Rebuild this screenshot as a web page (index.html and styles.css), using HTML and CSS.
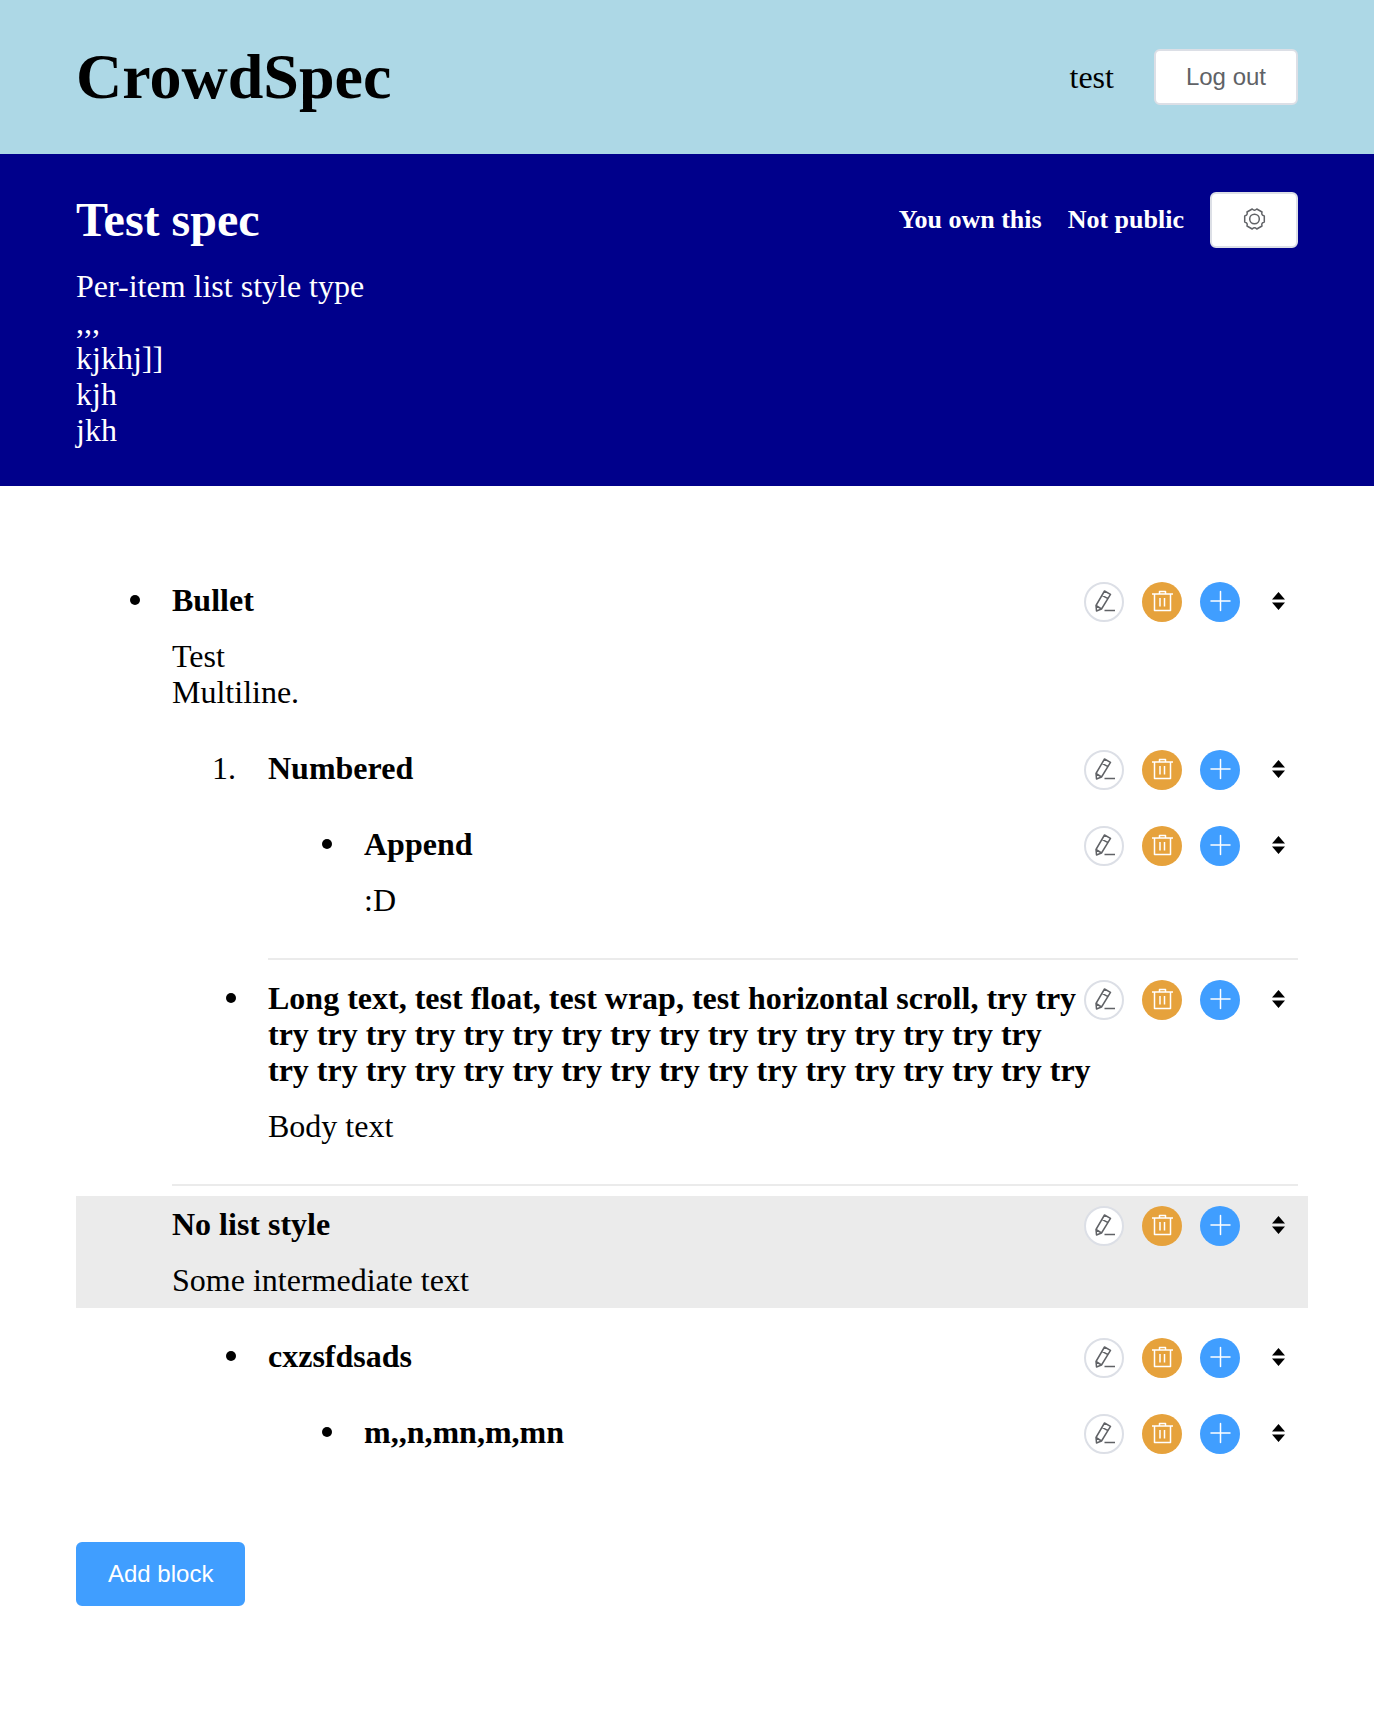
FILE: index.html
```html
<!DOCTYPE html>
<html lang="en">
<head>
<meta charset="utf-8">
<meta name="viewport" content="width=device-width, initial-scale=1">
<title>CrowdSpec</title>
<link rel="stylesheet" href="styles.css">
</head>
<body>
<svg class="sprite" aria-hidden="true">
  <symbol id="edit" viewBox="0 0 24 24"><path d="M12.500 1 18.500 4.400 9.500 19 4.500 21 4 15.500zM10 5.300l6 3.400M4 15.500l5.500 3.500M12.500 20.500H23" fill="none" stroke="currentColor" stroke-width="1.500" stroke-linejoin="round"/></symbol>
  <symbol id="trash" viewBox="0 0 24 24"><path d="M2 4h21M9.500 4V1.500h6V4M4.500 4v16.500h16V4M10 8v8.500M14.500 8v8.500" fill="none" stroke="currentColor" stroke-width="1.500" stroke-linejoin="round"/></symbol>
  <symbol id="plus" viewBox="0 0 24 24"><path d="M12.500 1.500v19M3 11h19" fill="none" stroke="currentColor" stroke-width="1.500" stroke-linecap="round"/></symbol>
  <symbol id="sort" viewBox="0 0 24 24"><path d="M12.500 2 19 9.500H6zM6 12.500h13L12.500 20z" fill="currentColor"/></symbol>
  <symbol id="gear" viewBox="0 0 24 24"><g fill="none" stroke="currentColor" stroke-width="1.500" stroke-linejoin="round"><path d="M22.300 8V14Q19 14.700 20 18L14.800 21Q12.500 18.500 10.200 21L5 18Q6 14.700 2.700 14V8Q6 7.300 5 4L10.200 1Q12.500 3.500 14.800 1L20 4Q19 7.300 22.300 8z"/><circle cx="12.500" cy="11" r="4.800"/></g></symbol>
</svg>
<header class="site-header">
  <h1 class="brand">CrowdSpec</h1>
  <div class="account">
    <span>test</span>
    <button class="button" type="button">Log out</button>
  </div>
</header>
<section class="spec">
  <div class="spec-bar">
    <h2 class="spec-title">Test spec</h2>
    <div class="spec-status">
      <span>You own this</span>
      <span>Not public</span>
      <button class="button" type="button" aria-label="Settings"><svg class="gear"><use href="#gear"/></svg></button>
    </div>
  </div>
  <p class="spec-text">Per-item list style type
,,,
kjkhj]]
kjh
jkh</p>
</section>
<main class="content">
  <ul class="blocks">
    <li>
      <div class="block">
        <span class="marker disc"></span>
        <div class="actions"><button class="round edit" type="button" aria-label="Edit"><svg><use href="#edit"/></svg></button><button class="round remove" type="button" aria-label="Delete"><svg><use href="#trash"/></svg></button><button class="round add" type="button" aria-label="Add"><svg><use href="#plus"/></svg></button><button class="round move" type="button" aria-label="Move"><svg><use href="#sort"/></svg></button></div>
        <h3 class="block-title">Bullet</h3>
        <p class="block-text">Test
Multiline.</p>
      </div>
      <ul class="blocks nested">
        <li>
          <div class="block">
            <span class="marker">1.</span>
            <div class="actions"><button class="round edit" type="button" aria-label="Edit"><svg><use href="#edit"/></svg></button><button class="round remove" type="button" aria-label="Delete"><svg><use href="#trash"/></svg></button><button class="round add" type="button" aria-label="Add"><svg><use href="#plus"/></svg></button><button class="round move" type="button" aria-label="Move"><svg><use href="#sort"/></svg></button></div>
            <h3 class="block-title">Numbered</h3>
          </div>
          <ul class="blocks nested">
            <li>
              <div class="block">
                <span class="marker disc"></span>
                <div class="actions"><button class="round edit" type="button" aria-label="Edit"><svg><use href="#edit"/></svg></button><button class="round remove" type="button" aria-label="Delete"><svg><use href="#trash"/></svg></button><button class="round add" type="button" aria-label="Add"><svg><use href="#plus"/></svg></button><button class="round move" type="button" aria-label="Move"><svg><use href="#sort"/></svg></button></div>
                <h3 class="block-title">Append</h3>
                <p class="block-text">:D</p>
              </div>
            </li>
          </ul>
        </li>
        <li>
          <hr class="rule">
          <div class="block">
            <span class="marker disc"></span>
            <div class="actions"><button class="round edit" type="button" aria-label="Edit"><svg><use href="#edit"/></svg></button><button class="round remove" type="button" aria-label="Delete"><svg><use href="#trash"/></svg></button><button class="round add" type="button" aria-label="Add"><svg><use href="#plus"/></svg></button><button class="round move" type="button" aria-label="Move"><svg><use href="#sort"/></svg></button></div>
            <h3 class="block-title">Long text, test float, test wrap, test horizontal scroll, try try try try try try try try try try try try try try try try try try try try try try try try try try try try try try try try try try try</h3>
            <p class="block-text">Body text</p>
          </div>
        </li>
      </ul>
    </li>
    <li>
      <hr class="rule">
      <div class="block current">
        <div class="actions"><button class="round edit" type="button" aria-label="Edit"><svg><use href="#edit"/></svg></button><button class="round remove" type="button" aria-label="Delete"><svg><use href="#trash"/></svg></button><button class="round add" type="button" aria-label="Add"><svg><use href="#plus"/></svg></button><button class="round move" type="button" aria-label="Move"><svg><use href="#sort"/></svg></button></div>
        <h3 class="block-title">No list style</h3>
        <p class="block-text">Some intermediate text</p>
      </div>
      <ul class="blocks nested">
        <li>
          <div class="block">
            <span class="marker disc"></span>
            <div class="actions"><button class="round edit" type="button" aria-label="Edit"><svg><use href="#edit"/></svg></button><button class="round remove" type="button" aria-label="Delete"><svg><use href="#trash"/></svg></button><button class="round add" type="button" aria-label="Add"><svg><use href="#plus"/></svg></button><button class="round move" type="button" aria-label="Move"><svg><use href="#sort"/></svg></button></div>
            <h3 class="block-title">cxzsfdsads</h3>
          </div>
          <ul class="blocks nested">
            <li>
              <div class="block">
                <span class="marker disc"></span>
                <div class="actions"><button class="round edit" type="button" aria-label="Edit"><svg><use href="#edit"/></svg></button><button class="round remove" type="button" aria-label="Delete"><svg><use href="#trash"/></svg></button><button class="round add" type="button" aria-label="Add"><svg><use href="#plus"/></svg></button><button class="round move" type="button" aria-label="Move"><svg><use href="#sort"/></svg></button></div>
                <h3 class="block-title">m,,n,mn,m,mn</h3>
              </div>
            </li>
          </ul>
        </li>
      </ul>
    </li>
  </ul>
  <button class="button primary" type="button">Add block</button>
</main>
</body>
</html>
```

FILE: styles.css
```css
* {
  box-sizing: border-box;
}

body {
  margin: 0;
  background: #fff;
  color: #000;
  font: 32px/36px "Liberation Serif", "Times New Roman", serif;
}

h1, h2, h3, p {
  margin: 0;
}

.sprite {
  display: none;
}

.site-header {
  display: flex;
  align-items: center;
  justify-content: space-between;
  padding: 40px 76px;
  background: lightblue;
}

.brand {
  font-size: 64px;
  line-height: 74px;
}

.account {
  display: flex;
  align-items: center;
  gap: 40px;
}

.button {
  height: 56px;
  padding: 0 30px;
  border: 2px solid #dcdfe6;
  border-radius: 6px;
  background: #fff;
  color: #606266;
  font: 24px/24px "Liberation Sans", Arial, sans-serif;
}

.spec {
  padding: 38px 76px;
  background: darkblue;
  color: #fff;
}

.spec-bar {
  display: flex;
  align-items: center;
  justify-content: space-between;
  margin-bottom: 20px;
}

.spec-title {
  font-size: 48px;
  line-height: 56px;
}

.spec-status {
  display: flex;
  align-items: center;
  gap: 26px;
  font-size: 26px;
  font-weight: bold;
}

.gear {
  display: block;
  width: 24px;
  height: 24px;
}

.spec-text, .block-text {
  white-space: pre-line;
}

.content {
  padding: 86px 76px 106px;
}

.blocks {
  margin: 0;
  padding: 0;
  list-style: none;
}

.nested {
  margin: 20px 0 0 96px;
}

.block {
  margin-right: -10px;
  padding: 10px 10px 10px 96px;
}

.current {
  background: #ebebeb;
}

.marker {
  float: left;
  width: 96px;
  margin-left: -96px;
  padding-right: 32px;
  text-align: right;
}

.disc {
  display: flex;
  align-items: center;
  justify-content: flex-end;
  height: 36px;
}

.disc::before {
  width: 10px;
  height: 10px;
  border-radius: 50%;
  background: #000;
  content: "";
}

.block-title {
  font-size: 32px;
}

.block-text {
  margin-top: 20px;
}

.rule {
  height: 2px;
  margin: 30px 0 10px 96px;
  border: 0;
  background: #ebebeb;
}

.actions {
  display: flex;
  float: right;
  gap: 18px;
}

.round {
  display: flex;
  align-items: center;
  justify-content: center;
  width: 40px;
  height: 40px;
  padding: 0;
  border: 0;
  border-radius: 50%;
  background: none;
  color: #fff;
}

.round svg {
  width: 24px;
  height: 24px;
}

.edit {
  border: 2px solid #dcdfe6;
  background: #fff;
  color: #606266;
}

.remove {
  background: #e6a23c;
}

.add {
  background: #409eff;
}

.move {
  color: #000;
}

.primary {
  height: 64px;
  margin-top: 82px;
  border-color: #409eff;
  background: #409eff;
  color: #fff;
}
```
